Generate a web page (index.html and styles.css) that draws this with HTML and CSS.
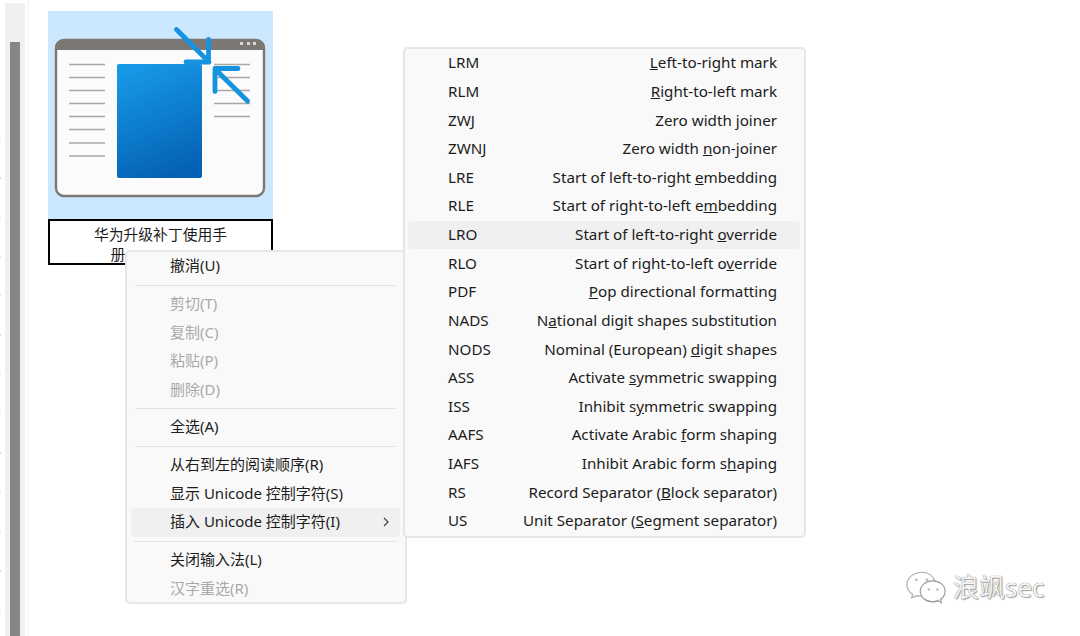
FILE: index.html
```html
<!DOCTYPE html>
<html>
<head>
  <meta charset="utf-8">
  <link rel="stylesheet" href="styles.css">
</head>
<body>
  <div class="edge-ticks"></div>
  <div class="scroll-track"><div class="scroll-thumb"></div></div>
  <div class="desktop">
    <div class="file-item">
      <div class="file-thumb">
        <svg class="file-icon" width="224" height="208" viewBox="0 0 224 208">
          <defs>
            <linearGradient id="doc" x1="0.3" y1="0" x2="0.6" y2="1">
              <stop offset="0" stop-color="#1798e6"/>
              <stop offset="1" stop-color="#0461b4"/>
            </linearGradient>
          </defs>
          <rect x="8" y="29" width="208" height="156" rx="8" fill="#fbfbfb" stroke="#7b7874" stroke-width="2.4"/>
          <path d="M7 37a9 9 0 0 1 9-9h192a9 9 0 0 1 9 9v2H7z" fill="#7b7874"/>
          <rect x="192" y="31" width="3" height="3" fill="#d8d8d8"/>
          <rect x="199" y="31" width="3" height="3" fill="#d8d8d8"/>
          <rect x="205" y="31" width="3" height="3" fill="#d8d8d8"/>
          <path d="M21 53.500h36M21 66.500h36M21 79.500h36M21 92.500h36M21 105.500h36M21 118.500h36M21 132h36M21 145h36M166 53.500h36M166 66.500h36M166 79.500h36M166 92.500h36M166 105.500h36" stroke="#a8a8a8" stroke-width="1.300" fill="none"/>
          <rect x="69" y="53" width="85" height="114" rx="2" fill="url(#doc)"/>
          <path d="M128.500 18.500L161 51M160.500 28.500V51H138M199.500 90L167 58M190 57.500H167V80.500" stroke="#1592e0" stroke-width="4.800" stroke-linecap="round" stroke-linejoin="round" fill="none"/>
        </svg>
      </div>
      <div class="file-name">华为升级补丁使用手<br>册<span class="file-name-rest"></span></div>
    </div>
  </div>

  <div class="menu menu-main">
    <div class="menu-row">撤消(U)</div>
    <div class="menu-sep"></div>
    <div class="menu-row off">剪切(T)</div>
    <div class="menu-row off">复制(C)</div>
    <div class="menu-row off">粘贴(P)</div>
    <div class="menu-row off">删除(D)</div>
    <div class="menu-sep"></div>
    <div class="menu-row">全选(A)</div>
    <div class="menu-sep"></div>
    <div class="menu-row">从右到左的阅读顺序(R)</div>
    <div class="menu-row">显示 Unicode 控制字符(S)</div>
    <div class="menu-row hover">插入 Unicode 控制字符(I)
      <svg class="chevron" width="8" height="12" viewBox="0 0 8 12"><path d="M2 2l4 4-4 4" fill="none" stroke="#444" stroke-width="1.200"/></svg>
    </div>
    <div class="menu-sep"></div>
    <div class="menu-row">关闭输入法(L)</div>
    <div class="menu-row off">汉字重选(R)</div>
  </div>

  <div class="menu menu-sub">
    <div class="menu-row"><span>LRM</span><span><u>L</u>eft-to-right mark</span></div>
    <div class="menu-row"><span>RLM</span><span><u>R</u>ight-to-left mark</span></div>
    <div class="menu-row"><span>ZWJ</span><span>Zero width <u>j</u>oiner</span></div>
    <div class="menu-row"><span>ZWNJ</span><span>Zero width <u>n</u>on-joiner</span></div>
    <div class="menu-row"><span>LRE</span><span>Start of left-to-right <u>e</u>mbedding</span></div>
    <div class="menu-row"><span>RLE</span><span>Start of right-to-left e<u>m</u>bedding</span></div>
    <div class="menu-row hover"><span>LRO</span><span>Start of left-to-right <u>o</u>verride</span></div>
    <div class="menu-row"><span>RLO</span><span>Start of right-to-left o<u>v</u>erride</span></div>
    <div class="menu-row"><span>PDF</span><span><u>P</u>op directional formatting</span></div>
    <div class="menu-row"><span>NADS</span><span>N<u>a</u>tional digit shapes substitution</span></div>
    <div class="menu-row"><span>NODS</span><span>Nominal (European) <u>d</u>igit shapes</span></div>
    <div class="menu-row"><span>ASS</span><span>Activate <u>s</u>ymmetric swapping</span></div>
    <div class="menu-row"><span>ISS</span><span>Inhibit s<u>y</u>mmetric swapping</span></div>
    <div class="menu-row"><span>AAFS</span><span>Activate Arabic <u>f</u>orm shaping</span></div>
    <div class="menu-row"><span>IAFS</span><span>Inhibit Arabic form s<u>h</u>aping</span></div>
    <div class="menu-row"><span>RS</span><span>Record Separator (<u>B</u>lock separator)</span></div>
    <div class="menu-row"><span>US</span><span>Unit Separator (<u>S</u>egment separator)</span></div>
  </div>

  <div class="watermark">
    <svg width="42" height="37" viewBox="0 0 44 36">
      <path d="M18 2C9 2 2 8 2 15c0 4 2 7.500 6 10l-1 4 5-2.500c1.500.5 3 .7 4.500.7M32 13C30 6 24.500 2 18 2" fill="#fff" stroke="#aaa" stroke-width="1.200"/>
      <ellipse cx="29" cy="22" rx="13" ry="11" fill="#fff" stroke="#999" stroke-width="1.200"/>
      <path d="M34 31l4 3-.5-5" fill="#fff" stroke="#999" stroke-width="1.200"/>
      <circle cx="12" cy="10" r="1.500" fill="#bbb"/><circle cx="23" cy="10" r="1.500" fill="#bbb"/>
      <circle cx="25" cy="20" r="1.300" fill="#bbb"/><circle cx="34" cy="20" r="1.300" fill="#bbb"/>
    </svg>
    <span class="watermark-text">浪飒sec</span>
  </div>
</body>
</html>
```
FILE: styles.css
```css
html, body {
  margin: 0;
  height: 100%;
  overflow: hidden;
}

body {
  position: relative;
  display: flex;
  background-color: #fff;
  font-family: "Noto Sans", "Noto Sans CJK SC", sans-serif;
  color: #1c1c1c;
}

.edge-ticks {
  width: 1px;
  margin: 100px 4px 0 0;
  background: repeating-linear-gradient(to bottom, transparent 0, transparent 38px, #dcdcdc 38px, #dcdcdc 39.300px);
}

.scroll-track {
  width: 20px;
  margin: 3px 2px 0 0;
  padding-top: 39px;
  box-sizing: border-box;
  background-color: #f0f0f0;
}

.scroll-thumb {
  width: 10px;
  height: 100%;
  margin-left: 5px;
  background-color: #868686;
}

.desktop {
  border-left: 2px solid #f8f8f8;
  padding: 11px 0 0 19px;
}

.file-item {
  width: 225px;
}

.file-thumb {
  height: 208px;
  background-color: #cce8ff;
}

.file-icon {
  display: block;
}

.file-name {
  height: 46px;
  box-sizing: border-box;
  border: 2px solid #000;
  padding-top: 3px;
  text-align: center;
  font-size: 14.800px;
  line-height: 20px;
  background-color: #fff;
}

.file-name-rest {
  display: inline-block;
  width: 85px;
}

.menu {
  position: absolute;
  box-sizing: border-box;
  background-color: #f9f9f9;
  border: 2px solid #e6e6e6;
  border-radius: 5px;
}

.menu-main {
  left: 125px;
  top: 250px;
  width: 282px;
  height: 354px;
  padding: 0 5px 0 4px;
  font-size: 15px;
}

.menu-sub {
  left: 403px;
  top: 47px;
  width: 403px;
  height: 491px;
  padding: 0 4px 0 3px;
  font-size: 15.200px;
}

.menu-row {
  display: flex;
  align-items: center;
  justify-content: space-between;
  box-sizing: border-box;
  height: 28.625px;
  padding: 0 23px 2px 40px;
  border-radius: 4px;
  white-space: nowrap;
}

.menu-main .menu-row {
  padding: 0 10px 3px 39px;
}

.menu-row.off {
  color: #a9a9a9;
}

.menu-row.hover {
  background-color: #f0f0f0;
}

.chevron {
  margin-top: 3px;
}

.menu-sep {
  height: 1px;
  margin: 4px 4px;
  background-color: #e2e2e2;
}

.watermark {
  position: absolute;
  left: 905px;
  top: 569px;
  display: flex;
  align-items: center;
  gap: 6px;
}

.watermark-text {
  font-size: 26px;
  line-height: 37px;
  color: #f6f6f6;
  text-shadow: 0 0 1px #555, 1px 1px 1px #aaa;
}
```
